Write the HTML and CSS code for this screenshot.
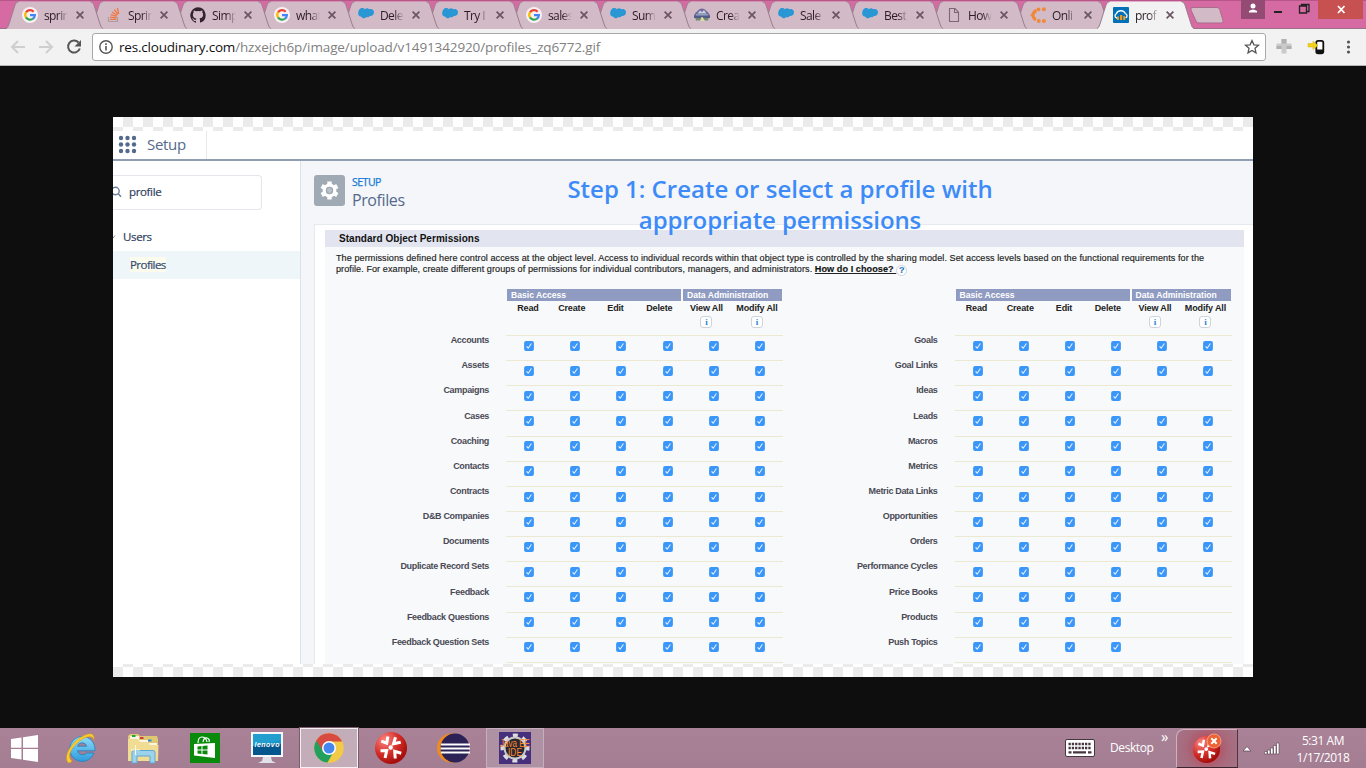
FILE: index.html
```html
<!DOCTYPE html>
<html lang="en">
<head>
<meta charset="utf-8">
<title>profiles_zq6772.gif</title>
<link rel="stylesheet" href="styles.css">
</head>
<body>
<svg class="defs" aria-hidden="true">
  <symbol id="google" viewBox="0 0 16 16"><circle cx="8" cy="8" r="8" fill="#f8f0f4"/><g fill="none" stroke-width="2.3"><path d="M4 5.3A4.8 4.8 0 0 1 11.6 4.7" stroke="#ea4335"/><path d="M4.1 10.6A4.8 4.8 0 0 1 4.1 5.2" stroke="#fbbc05"/><path d="M11.2 11.5A4.8 4.8 0 0 1 4 10.4" stroke="#34a853"/><path d="M8 8.2h4.8A4.8 4.8 0 0 1 11.1 11.6" stroke="#4285f4"/></g></symbol>
  <symbol id="stack" viewBox="0 0 16 16"><path d="M2.5 10v4.5h9V10" fill="none" stroke="#a99aa5" stroke-width="1.2"/><path d="M4 12.4h6.3M4.200 10.100l6.200.7M4.700 7.600l6 1.700M6 5l5.300 3.200M8.200 2.500l3.900 4.800M11.300 1l1.500 5.800" stroke="#ef7740" stroke-width="1.2"/></symbol>
  <symbol id="github" viewBox="0 0 16 16"><path fill="#33222f" d="M8 .2a8 8 0 0 0-2.500 15.500c.4.100.5-.2.500-.4v-1.400c-2.200.5-2.700-1-2.700-1-.4-.9-.9-1.200-.9-1.200-.7-.5.1-.5.1-.5.800.1 1.200.8 1.200.8.700 1.200 1.900.9 2.300.7.100-.5.300-.9.500-1.100-1.800-.2-3.600-.9-3.600-4 0-.9.300-1.600.8-2.100-.1-.2-.4-1 .1-2.100 0 0 .7-.2 2.200.8a7.600 7.600 0 0 1 4 0c1.500-1 2.200-.8 2.200-.8.400 1.100.2 1.900.1 2.100.5.600.8 1.300.8 2.100 0 3.100-1.900 3.700-3.700 3.900.3.300.6.800.6 1.500v2.200c0 .2.100.5.600.4A8 8 0 0 0 8 .2z"/></symbol>
  <symbol id="cloud" viewBox="0 0 16 16"><path fill="#2a97d5" d="M1.200 2.700C2.600.3 5.700.7 6.900 2.200c1.200-1.400 3.300-1.300 4.300.1 2.800-1 4.800.9 4.800 3.100 0 2.500-2.300 4-4.300 3.500-.8 1.400-2.200 1.800-3.600 1.200-1.100 1.800-4 1.600-5-.6C1.200 9.700 0 8 .2 6.200c0-1.500.4-2.500 1-3.500z"/></symbol>
  <symbol id="trail" viewBox="0 0 16 16"><path d="M0 10C0 6.500 2.500 5 4 3.500 6 .8 10 .8 12 3.500 13.500 5 16 6.500 16 10z" fill="#70699b"/><path d="M3.500 6.500l2.500-3 2 1.500 2-2 2.500 3.500z" fill="#c4cfdf"/><path d="M1 10h14l-1 3.500H2z" fill="#6c8978"/><path d="M0 8.500h16v2.500H0z" fill="#545b87"/><path d="M2 7h12v1.500H2z" fill="#8ea1bb"/><path d="M6 14l1.500-4h1L11 14z" fill="#ded7a1"/></symbol>
  <symbol id="file" viewBox="0 0 16 16"><path d="M3.500 1.500h5.500l3.500 3.600v9.400h-9zM8.500 1.500v4h4" fill="none" stroke="#7e6676" stroke-width="1.100"/></symbol>
  <symbol id="dots" viewBox="0 0 16 16"><path d="M6.500 3.500Q3 5 3 8.300 3.300 11.500 6 12.800" fill="none" stroke="#f08837" stroke-width="3"/><path d="M0 8l3-2v4z" fill="#f08837"/><g fill="#f08837"><circle cx="8.500" cy="2.300" r="1.900"/><circle cx="13.900" cy="2.300" r="2"/><circle cx="8.800" cy="14" r="1.900"/><circle cx="13.900" cy="14" r="2"/></g></symbol>
  <symbol id="cloudinary" viewBox="0 0 16 16"><rect width="16" height="16" rx="1" fill="#0071b9"/><path d="M4 11H3.500A2.400 2.400 0 0 1 3.400 6.600 4.900 4.900 0 0 1 12.300 6.600 2.300 2.300 0 0 1 12.500 11" fill="none" stroke="#fff" stroke-width="1.300"/><path d="M4 9.500h2V13H4zM7 8h2.200v5H7zM10.200 9h2v4h-2z" fill="#e99b1f"/></symbol>
  <symbol id="close" viewBox="0 0 8 8"><path d="M.6.600l6.800 6.800M7.400.600L.6 7.400" stroke="#6a5563" stroke-width="1.700"/></symbol>
  <symbol id="check" viewBox="0 0 10 10"><rect x=".1" y=".1" width="9.800" height="9.800" rx="2" fill="#3a96f8"/><path d="M2.600 5.300l1.600 1.900 3.200-4.700" fill="none" stroke="#e8f3ff" stroke-width="1.100"/></symbol>
  <symbol id="burst" viewBox="0 0 32 32"><circle cx="16" cy="16" r="16" fill="url(#red)"/><path d="M6.300 9.200l5.400 2 1.200-6.700M20.500 5.200l-2 6.500 7.200-1.500M5.500 18.800l6.200-.3-1.600 7.500M26.200 21.200l-6.500-1.900.5 7.200" fill="none" stroke="#fff" stroke-width="3"/><circle cx="15.700" cy="15.500" r="2.200" fill="#fff"/></symbol>
  <radialGradient id="red" cx=".3" cy=".25" r=".75"><stop offset="0" stop-color="#f98580"/><stop offset=".6" stop-color="#d42d28"/><stop offset="1" stop-color="#a60f0c"/></radialGradient>
  <linearGradient id="ie" x2="0" y2="1"><stop offset="0" stop-color="#8cdcfa"/><stop offset="1" stop-color="#2e9bdc"/></linearGradient>
</svg>

<header class="tabstrip">
  <div class="tabs" id="tabs"></div>
  <svg class="newtab" width="34" height="18"><path d="M3 .5h24q2 0 2.700 2l3.300 11q.8 2.500-1.700 2.500H9q-2 0-3-2L1 3Q0 .5 3 .5z" fill="#d3bac7" stroke="#a96c8b"/></svg>
  <div class="winbtns">
    <span class="user"><svg width="24" height="19"><circle cx="12" cy="6" r="2.500" fill="#fff"/><path d="M8 12.500V11q4-3 8 0v1.500z" fill="#fff"/></svg></span>
    <svg class="min" width="53" height="19"><path d="M9 12h8" stroke="#222" stroke-width="2"/><path d="M34.500 6h7v7h-7zM36.500 6V4.500h7.500v7h-2" fill="none" stroke="#222" stroke-width="1.300"/></svg>
    <span class="x"><svg width="45" height="19"><path d="M20 6l6.500 7M26.500 6L20 13" stroke="#fff" stroke-width="1.800"/></svg></span>
  </div>
</header>

<nav class="toolbar">
  <svg class="navicons" width="92" height="36"><g fill="none" stroke="#cfcfcf" stroke-width="2"><path d="M25 18H12M18 12l-6 6 6 6M39 18h13M46 12l6 6-6 6"/></g><path d="M78.500 13.500a6 6 0 1 0 1.300 6" fill="none" stroke="#555" stroke-width="2"/><path d="M81 11v6.500h-6.500z" fill="#555"/></svg>
  <div class="omnibox">
    <svg width="26" height="26"><circle cx="13" cy="13" r="6.200" fill="none" stroke="#555" stroke-width="1.400"/><path d="M13 12v4.500M13 9.200v1.700" stroke="#555" stroke-width="1.600"/></svg>
    <span class="url"><b>res.cloudinary.com</b>/hzxejch6p/image/upload/v1491342920/profiles_zq6772.gif</span>
    <svg class="star" width="26" height="26"><path d="M13 6.500l1.900 4.300 4.600.4-3.500 3.100 1 4.600-4-2.400L9 18.900l1-4.600-3.500-3.100 4.600-.4z" fill="none" stroke="#555" stroke-width="1.300"/></svg>
  </div>
  <svg width="100" height="36"><path d="M15.500 10h5v4.500h5v5.500h-5v4.500h-5V20h-5v-5.500h5z" fill="#cacaca"/><path d="M15.500 10h5v4.500h-5zM10.500 17h5v3h-5zM20.500 17h5v3h-5z" fill="#b0b0b0"/><rect x="50.300" y="11.800" width="7" height="12.500" rx="1.800" fill="#fff" stroke="#111" stroke-width="1.800"/><path d="M50.500 20.500h6.500V24h-6.500z" fill="#111"/><path d="M42 14.500h5V12l5 4.500-5 4v-2.500h-5z" fill="#f2d21b" stroke="#d3ae10" stroke-width=".5"/><g fill="#555"><circle cx="82.500" cy="13" r="1.600"/><circle cx="82.500" cy="18" r="1.600"/><circle cx="82.500" cy="23" r="1.600"/></g></svg>
</nav>

<main class="viewer">
  <div class="picture">
    <div class="appbar">
      <svg width="19" height="19" viewBox="0 0 19 19"><g fill="#54698d"><circle cx="3" cy="3" r="2.200"/><circle cx="9.500" cy="3" r="2.200"/><circle cx="16" cy="3" r="2.200"/><circle cx="3" cy="9.500" r="2.200"/><circle cx="9.500" cy="9.500" r="2.200"/><circle cx="16" cy="9.500" r="2.200"/><circle cx="3" cy="16" r="2.200"/><circle cx="9.500" cy="16" r="2.200"/><circle cx="16" cy="16" r="2.200"/></g></svg>
      <span class="appname">Setup</span>
    </div>
    <div class="body">
      <aside class="side">
        <div class="search"><svg width="10" height="14"><circle cx="2.500" cy="6" r="3.700" fill="none" stroke="#6b7c9a" stroke-width="1.400"/><path d="M5.300 8.800l2.700 3" stroke="#6b7c9a" stroke-width="1.500"/></svg><span>profile</span></div>
        <div class="group"><svg width="10" height="26"><path d="M0 14l2-2.500" stroke="#8290a8"/></svg>Users</div>
        <div class="item"><span>Profiles</span></div>
      </aside>
      <section class="content">
        <div class="pagehead">
          <svg width="31" height="31"><rect width="31" height="31" rx="3" fill="#9faab5"/><circle cx="15.500" cy="15.500" r="5.200" fill="none" stroke="#fff" stroke-width="3.400"/><path d="M15.500 6.500v4M15.500 20.500v4M7.700 11l3.500 2M19.800 18l3.500 2M7.700 20l3.500-2M19.800 13l3.500-2" stroke="#fff" stroke-width="4.400"/><circle cx="15.500" cy="15.500" r="3.700" fill="#9faab5"/><circle cx="15.500" cy="15.500" r="2.400" fill="#b9c1c9"/></svg>
          <div><div class="eyebrow">SETUP</div><div class="pagename">Profiles</div></div>
        </div>
        <div class="card">
          <div class="panel">
            <h2>Standard Object Permissions</h2>
            <p><span>The permissions defined here control access at the object level. Access to individual records within that object type is controlled by the sharing model. Set access levels based on the functional requirements for the</span><br><span>profile. For example, create different groups of permissions for individual contributors, managers, and administrators. <a>How do I choose?&nbsp;</a></span><em class="help">?</em></p>
            <div class="tables" id="tables"></div>
          </div>
        </div>
      </section>
    </div>
    <div class="caption"><span>Step 1: Create or select a profile with</span><span class="c2">appropriate permissions</span></div>
  </div>
</main>

<footer class="taskbar">
  <div class="apps">
    <span class="app start"><svg width="27" height="27"><path d="M0 4l10.500-1.600v10.400H0zM12 2.200L27 0v12.800H12zM0 14h10.500v10.400L0 23zM12 14h15v13l-15-2.200z" fill="#fff"/></svg></span>
    <span class="app"><svg width="32" height="32"><path d="M17 4.500a12.500 12.500 0 1 0 12 16.500h-7.500a5.200 5.200 0 0 1-9-2.200H30C30.500 11 25 4.500 17 4.500zm-4.500 9.700a4.800 4.800 0 0 1 9.200 0z" fill="url(#ie)" stroke="#2182bd" stroke-width=".8"/><path d="M3 30.500C-2 25 6 10 18 4c7-3.500 12-3.500 11 4.500-.5-6-8-4.500-15 1C5 17 2 25 7 29q-2 3-4 1.500z" fill="#fbca2c" stroke="#c99a1c" stroke-width=".5"/></svg></span>
    <span class="app"><svg width="32" height="32"><path d="M1 4l2-2h8l2 2h17l1 3v20H1z" fill="#e0c772"/><path d="M3 4h9v4h9v3h9v4H3z" fill="#f8f5e4"/><path d="M5 3h3.500v2H5z" fill="#22a642"/><path d="M13 5h3.500v2H13z" fill="#d43d35"/><path d="M21 7.500h3.500v2H21z" fill="#318ed8"/><path d="M1 7h10l2 3h8l2 3h8.500L31 29H1z" fill="#f0dc93"/><path d="M5 20.500q0-2 2-2h19q2 0 2 2V31h-5v-7H10v7H5z" fill="#9dd2ec" stroke="#5fa8d0"/><path d="M8.500 13v10M4 18h9" stroke="#fffbe4" stroke-width=".9"/></svg></span>
    <span class="app"><svg width="30" height="30"><path fill="#0a8a0a" d="M0 0h30v30H0z"/><path d="M4 11l21-1v15L4 22.500z" fill="#fff"/><path d="M8 10q0-6 4-6t5 5M13 9q1-5 4-4t2 4" fill="none" stroke="#fff" stroke-width="1.200"/><path d="M7.500 13.500l4-.5v3.500h-4zM12.500 13l5-.5v4h-5zM7.500 17.500h4V21l-4-.5zM12.500 17.500h5v4l-5-.5z" fill="#0a8a0a"/></svg></span>
    <span class="app"><svg width="32" height="32"><path d="M0 0h32v25H0z" fill="#f4f6f8"/><path d="M2 2h28v10H2z" fill="#1795c8"/><path d="M2 12h28v11H2z" fill="#04578c"/><path d="M2 14Q16 12 30 8V2H2z" fill="#219dce"/><path d="M12 25h8l1 4 4 2H7l4-2z" fill="#dfe3e7"/><text x="16" y="15" class="lenovo" textLength="25">lenovo</text></svg></span>
    <span class="app on"><svg width="30" height="30" viewBox="0 0 30 30"><circle cx="15" cy="15" r="14.700" fill="#f3ca45"/><path d="M15 15L2.200 7.500A14.700 14.700 0 0 0 13.500 29.600l6-10.500z" fill="#23a05d"/><path d="M2.200 7.500A14.700 14.700 0 0 1 28.200 8.500H15L9 18z" fill="#d84b40"/><circle cx="15" cy="15" r="7" fill="#fff"/><circle cx="15" cy="15" r="5.500" fill="#4587ef"/></svg></span>
    <span class="app"><svg width="32" height="32"><use href="#burst"/></svg></span>
    <span class="app"><svg width="33" height="30"><circle cx="14.500" cy="15" r="14.500" fill="#f28b1c"/><circle cx="18" cy="15" r="14.500" fill="#2c2255"/><path d="M4 11.500h29M3.500 15.500h29.500M4 19.500h29" stroke="#fff" stroke-width="2"/></svg></span>
    <span class="app open"><svg width="32" height="32" overflow="visible"><path fill="#46307c" d="M0 0h32v32H0z"/><circle cx="16" cy="16" r="12.500" fill="none" stroke="#ddd" stroke-width="4" stroke-dasharray="4.900 4.900" stroke-dashoffset="2.400"/><circle cx="16" cy="16" r="10.500" fill="#2b2730" stroke="#c9c9c9" stroke-width="2"/><text x="1" y="15" class="ide" textLength="30" lengthAdjust="spacingAndGlyphs">Java EE</text><text x="9" y="24" class="ide" textLength="14" lengthAdjust="spacingAndGlyphs">IDE</text></svg></span>
  </div>
  <div class="tray">
    <svg class="kbd" width="30" height="18"><rect x=".5" y=".5" width="29" height="17" rx="1.500" fill="#fff" stroke="#473640"/><path d="M3.500 5h23M3.500 9h23" stroke="#473640" stroke-width="2.500" stroke-dasharray="2.300 1"/><path d="M3.500 13.300h3M8 13.300h13M23 13.300h3.500" stroke="#473640" stroke-width="2.300"/></svg>
    <span class="desk">Desktop</span>
    <span class="more">»</span>
    <div class="alert"><svg width="32" height="32"><svg x="2" y="3" width="27" height="27" viewBox="0 0 32 32"><use href="#burst"/></svg><circle cx="23" cy="8" r="7" fill="#ee6130" stroke="#f7b29b" stroke-width=".8"/><path d="M20.300 5.300l5.400 5.400M25.700 5.300l-5.400 5.400" stroke="#fff" stroke-width="2"/></svg></div>
    <svg class="sys" width="46" height="20"><path d="M4 13l4-4.500 4 4.500z" fill="#fff" stroke="#59404e" stroke-width=".7"/><g fill="#fff" stroke="#59404e" stroke-width=".6"><path d="M25.500 13.500h2.500V16h-2.500zM28.500 12H31v4h-2.500zM31.500 10H34v6h-2.500zM34.500 7.500H37V16h-2.500zM37.500 5H40v11h-2.500z"/></g></svg>
    <div class="clock"><div>5:31 AM</div><div>1/17/2018</div></div>
  </div>
</footer>
<script src="app.js"></script>
</body>
</html>
```
FILE: app.js
```js
const tabs = [["google","sprin"],["stack","Sprin"],["github","Simp"],["google","what"],["cloud","Dele"],["cloud","Try I"],["google","sales"],["cloud","Sum"],["trail","Crea"],["cloud","Sale"],["cloud","Best"],["file","How"],["dots","Onli"],["cloudinary","prof"]];

document.getElementById("tabs").innerHTML = tabs.map(([icon, name], i) => {
  const active = i === tabs.length - 1;
  return `<div class="tab${active ? " active" : ""}" style="z-index:${active ? 40 : 30 - i}">
    <svg class="shape" width="98" height="29"><path class="fill" d="M0 29Q2 28 3 24L9 5Q10 1.500 13 1.500H84Q87 1.500 88 5L94 24Q95 28 97 29z"/><path class="edge" d="M0 28.500Q2 28 3 24L9 5Q10 1.500 13 1.500M84 1.500Q87 1.500 88 5L94 24Q95 28 97 28.500"/></svg>
    <svg class="fav" width="16" height="16"><use href="#${icon}"/></svg><span class="name">${name}</span><svg class="cl" width="8" height="8"><use href="#close"/></svg></div>`;
}).join("");

const left = ["Accounts","Assets","Campaigns","Cases","Coaching","Contacts","Contracts","D&amp;B Companies","Documents","Duplicate Record Sets","Feedback","Feedback Questions","Feedback Question Sets"].map(n => [n, 6]);
const right = [["Goals",6],["Goal Links",6],["Ideas",4],["Leads",6],["Macros",6],["Metrics",6],["Metric Data Links",6],["Opportunities",6],["Orders",6],["Performance Cycles",6],["Price Books",4],["Products",4],["Push Topics",4]];

const table = rows => `<div class="perm">
  <div class="groups"><span class="basic">Basic Access</span><span class="data">Data Administration</span></div>
  <div class="cols"><span>Read</span><span>Create</span><span>Edit</span><span>Delete</span><span>View All<i>i</i></span><span>Modify All<i>i</i></span></div>
  ${rows.map(([n, c]) => `<div class="row"><span class="obj">${n}</span><div class="checks">${'<svg width="10" height="10"><use href="#check"/></svg>'.repeat(c)}</div></div>`).join("")}
  <div class="row last"><span class="obj"></span><div class="checks"></div></div>
</div>`;

document.getElementById("tables").innerHTML = table(left) + table(right);
```
FILE: styles.css
```css
* { box-sizing: border-box; }
body { margin: 0; width: 1366px; height: 768px; overflow: hidden; display: flex; flex-direction: column; font-family: "Open Sans", "Noto Sans", sans-serif; background: #0e0e0e; }
svg { display: block; flex: none; }
.defs { position: absolute; width: 0; height: 0; }

.tabstrip { height: 29px; flex: none; display: flex; background: #d66aa3; border-bottom: 1px solid #9b7389; padding-left: 6px; border-top: 1px solid #b75789; }
.tabs { display: flex; margin-top: -1px; }
.tab { width: 84px; height: 29px; flex: none; position: relative; display: flex; align-items: center; padding: 1px 0 0 16px; }
.tab.active { padding-left: 15px; }
.shape { position: absolute; left: 0; top: 0; }
.active .shape { left: -1px; }
.shape .fill { fill: #d3bac7; }
.shape .edge { fill: none; stroke: #9b7e8e; }
.active .fill { fill: #f2f2f2; }
.fav, .name, .cl { position: relative; }
.name { width: 26px; margin-left: 6px; white-space: nowrap; font-size: 12px; letter-spacing: -.6px; color: #2b1c26; -webkit-mask-image: linear-gradient(90deg, #000 55%, transparent 92%); mask-image: linear-gradient(90deg, #000 55%, transparent 92%); }
.cl { margin-left: 6px; }
.active .cl { margin-left: 5px; }
.newtab { margin: 6px 0 0 8px; }
.winbtns { display: flex; margin: -1px 3px 0 auto; height: 19px; }
.user { background: #934a73; }
.x { background: #c75050; }

.toolbar { height: 37px; flex: none; display: flex; background: #f2f2f2; border-bottom: 1px solid #b5b5b5; }
.omnibox { width: 1174px; height: 28px; margin-top: 4px; background: #fff; border: 1px solid #a9a9a9; border-radius: 3px; display: flex; align-items: center; }
.url { font-size: 13.500px; letter-spacing: -.12px; color: #808080; white-space: nowrap; }
.url b { color: #111; font-weight: 400; letter-spacing: -.2px; }
.star { margin-left: auto; }

.viewer { flex: 1; padding: 51px 113px; }
.picture { position: relative; width: 1140px; height: 560px; padding: 14px 0 13px; background: repeating-conic-gradient(#ebebeb 0 25%, #fff 0 50%) 0 0 / 20px 20px; display: flex; flex-direction: column; }
.appbar { height: 30px; flex: none; background: #fff; border-bottom: 2px solid #919eb1; display: flex; align-items: center; padding: 0 0 1px 5px; }
.appname { height: 28px; width: 60px; margin-left: 10px; border-right: 1px solid #e6e9ee; font-size: 15px; line-height: 27px; color: #54698d; font-weight: 400; letter-spacing: -.3px; }
.body { flex: 1; min-height: 0; display: flex; }
.side { width: 188px; background: #fff; border-right: 1px solid #dde2ea; padding-top: 14px; font-size: 11.500px; letter-spacing: -.35px; color: #30405f; -webkit-text-stroke: .2px #30405f; }
.search { width: 149px; height: 35px; border: 1px solid #e3e6ea; border-left: 0; border-radius: 0 4px 4px 0; display: flex; align-items: center; gap: 6px; padding-bottom: 2px; }
.group { height: 41px; padding-top: 14px; line-height: 26px; display: flex; }
.item { height: 28px; line-height: 28px; background: #eff6fa; padding-left: 17px; }
.item span { background: #fbfbee; color: #33507c; letter-spacing: -.55px; }
.content { flex: 1; min-width: 0; background: #f4f6f9; padding: 14px 0 0 13px; display: flex; flex-direction: column; }
.pagehead { display: flex; height: 49px; gap: 7px; flex: none; }
.eyebrow { font-size: 10.500px; line-height: 15px; color: #1679d8; letter-spacing: -.5px; -webkit-text-stroke: .25px #1679d8; }
.pagename { font-size: 16px; line-height: 20px; color: #54698d; letter-spacing: -.4px; }
.card { flex: 1; min-height: 0; background: #fff; border: 1px solid #e6e9ee; border-right: 0; border-bottom: 0; padding: 5px 9px 0 10px; }
.panel { height: 100%; background: #f7f9fa; font-family: "Liberation Sans", Arial, sans-serif; }
.panel h2 { margin: 0; height: 17px; background: #e2e4ef; padding-left: 14px; font-size: 10px; line-height: 17px; letter-spacing: .04px; color: #111; }
.panel p { margin: 6px 0 0 11px; height: 36px; font-size: 9.100px; line-height: 10.500px; letter-spacing: .062px; color: #222; white-space: nowrap; -webkit-text-stroke: .15px #222; }
.panel a { font-weight: 700; text-decoration: underline; color: #111; }
.help { display: inline-block; width: 11px; height: 11px; margin-left: 0; border: 1px solid #ccd4df; border-radius: 50%; font: bold 9px/9px "Liberation Sans", sans-serif; text-align: center; color: #268be0; background: #fff; vertical-align: -1px; margin-bottom: -3px; }
.tables { display: flex; gap: 171.500px; padding-left: 181px; }
.perm { width: 277px; }
.groups { display: flex; gap: 2px; height: 12px; padding: 0 1px; font-size: 8.600px; line-height: 13px; font-weight: 700; color: #fff; }
.basic { width: 174px; background: #8f9bc1; padding-left: 4px; }
.data { flex: 1; background: #8f9bc1; padding-left: 4px; }
.cols { display: grid; grid-template-columns: repeat(4, 43.800px) 50.500px 50.500px; height: 34px; padding-top: 2px; font-size: 9px; line-height: 11px; letter-spacing: -.15px; font-weight: 700; color: #222; text-align: center; white-space: nowrap; }
.cols i { display: block; width: 12px; height: 12px; margin: 2px auto 0; border: 1px solid #cfd4da; border-radius: 3px; background: #fff; font: bold 9px/10px "Liberation Serif", serif; color: #2685d8; }
.row { position: relative; height: 25.150px; }
.row.last { height: 1px; }
.obj { position: absolute; right: 294px; top: .2px; font-size: 9px; line-height: 11px; letter-spacing: -.33px; font-weight: 700; color: #4a4a56; white-space: nowrap; }
.checks { display: grid; grid-template-columns: repeat(6, 1fr); justify-items: center; border-top: 1px solid #ece9d2; padding-top: 4.700px; }
.caption { position: absolute; left: 454px; top: 56px; width: 426px; display: flex; flex-direction: column; align-items: center; font-size: 24px; line-height: 31px; font-weight: 600; color: #3d8bf8; white-space: nowrap; }
.c2 { letter-spacing: -.1px; }

.taskbar { height: 40px; flex: none; display: flex; justify-content: space-between; background: linear-gradient(#aa8297, #a37d91); }
.apps { display: flex; gap: 4px; }
.app { width: 58px; height: 40px; display: flex; align-items: center; justify-content: center; }
.start { width: 49px; margin-right: -1px; }
.on { background: #c2adb8; border: 1px solid #f5eff2; outline: 1px solid #7a5c6c; }
.open { background: #ae91a2; border: 1px solid #c6afbc; }
.lenovo { font: italic bold 7px "Liberation Sans", sans-serif; fill: #fff; text-anchor: middle; }
.ide { font: 10px "Liberation Sans", sans-serif; fill: #ff8a32; }
.tray { display: flex; color: #fff; font-size: 12px; }
.kbd { margin: 11px 15px 0 0; }
.desk { line-height: 39px; width: 51px; letter-spacing: -.4px; }
.more { width: 15px; font-size: 15px; line-height: 17px; }
.alert { width: 62px; height: 39px; margin-top: 1px; border: 1px solid #d0b0bd; border-right-color: #54333f; border-bottom-color: #3d2530; border-radius: 8px 0 0 0; background: radial-gradient(circle at 50% 50%, #bc3c4c, #a8697c 60%, #a47488); display: flex; align-items: center; justify-content: center; }
.sys { margin: 10px 0 0 1px; }
.clock { width: 81px; padding: 4px 5px 0 0; text-align: center; line-height: 17px; letter-spacing: -.45px; }
```
